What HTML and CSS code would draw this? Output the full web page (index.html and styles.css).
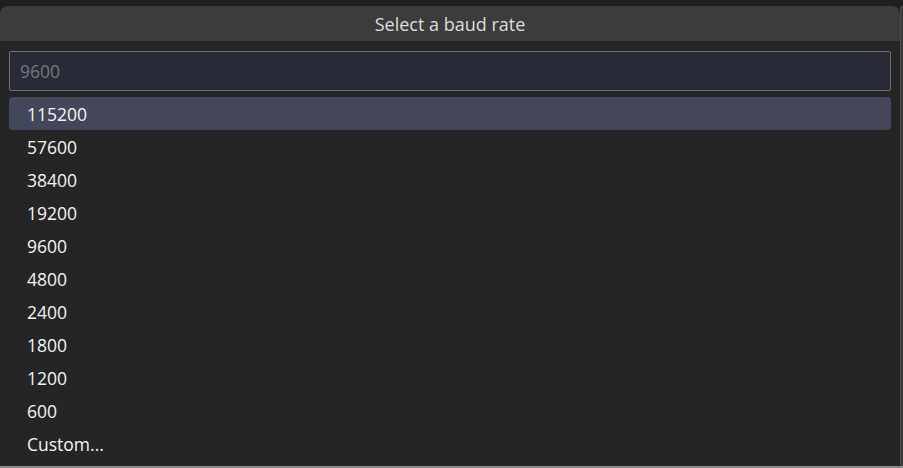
FILE: index.html
```html
<!DOCTYPE html>
<html>
<head>
<meta charset="utf-8">
<link rel="stylesheet" href="styles.css">
</head>
<body>
<div class="screen">
  <div class="widget">
    <div class="title">Select a baud rate</div>
    <div class="panel">
      <div class="input"><span class="placeholder">9600</span></div>
      <ul class="list">
        <li class="item active">115200</li>
        <li class="item">57600</li>
        <li class="item">38400</li>
        <li class="item">19200</li>
        <li class="item">9600</li>
        <li class="item">4800</li>
        <li class="item">2400</li>
        <li class="item">1800</li>
        <li class="item">1200</li>
        <li class="item">600</li>
        <li class="item">Custom...</li>
      </ul>
    </div>
  </div>
  <div class="edge"></div>
</div>
<div class="bottom"></div>
</body>
</html>
```
FILE: styles.css
```css
html, body {
  margin: 0;
  padding: 0;
  width: 903px;
  height: 468px;
  overflow: hidden;
  background: #1f1f1f;
  font-family: "Open Sans", "Noto Sans", sans-serif;
}
.screen {
  display: flex;
  height: 466px;
  padding-top: 6px;
  box-sizing: border-box;
}
.widget {
  width: 900px;
  display: flex;
  flex-direction: column;
  background: #252526;
  border-radius: 8px 8px 0 0;
  overflow: hidden;
}
.title {
  height: 35px;
  background: #3c3c3c;
  color: #dedede;
  font-size: 18px;
  font-weight: 500;
  display: flex;
  align-items: center;
  justify-content: center;
}
.panel {
  flex: 1;
  padding: 10px 9px 0 9px;
}
.input {
  height: 40px;
  box-sizing: border-box;
  border: 1px solid #6c6c7c;
  border-radius: 2px;
  background: #282a36;
  display: flex;
  align-items: center;
  padding-left: 10px;
  font-size: 17.5px;
}
.placeholder {
  color: #76767e;
}
.list {
  list-style: none;
  margin: 6px 0 0 0;
  padding: 0;
}
.item {
  height: 33px;
  display: flex;
  align-items: center;
  padding-left: 18px;
  color: #f4f4f4;
  font-size: 17.5px;
  font-weight: 500;
  border-radius: 4px;
}
.item.active {
  background: #44475a;
}
.edge {
  width: 3px;
  background: #3a3a3a;
  border-left: 1px solid #4a4a4a;
  box-sizing: border-box;
}
.bottom {
  height: 2px;
  background: #8c8c8c;
}
```
